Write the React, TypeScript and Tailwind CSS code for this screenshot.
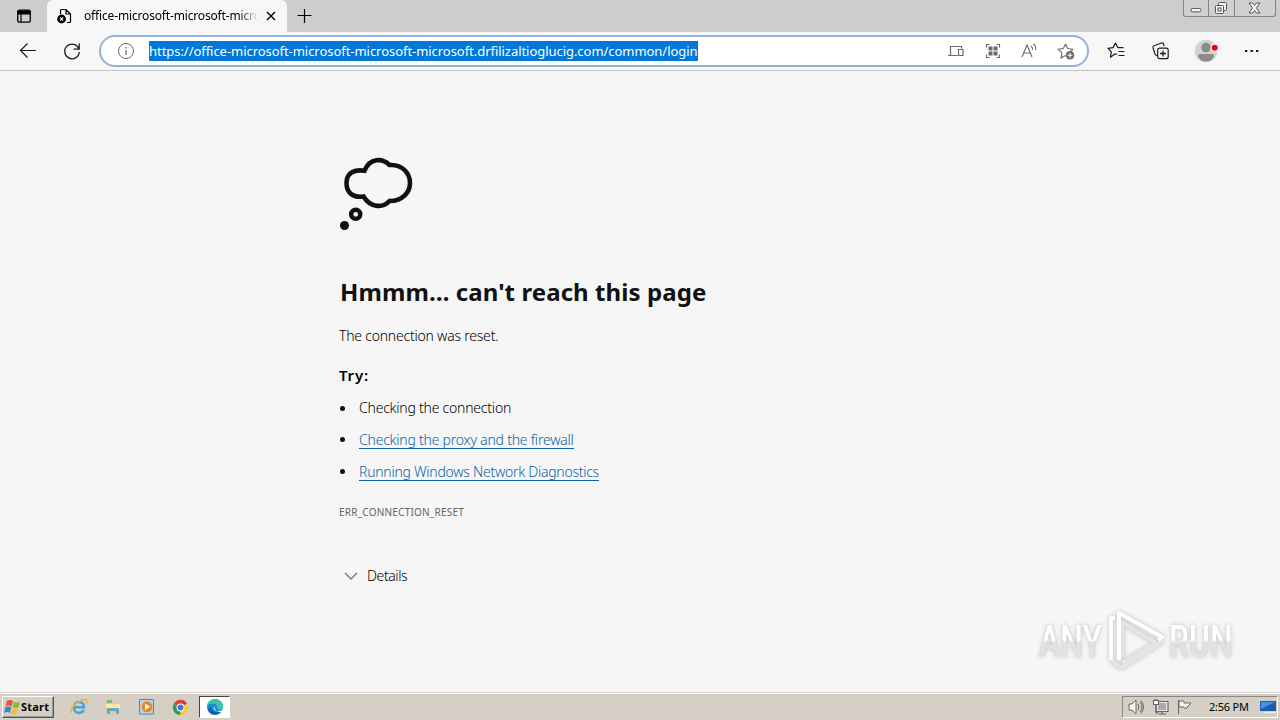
import type { ReactNode } from 'react';

function Icon({ children, className = '', box = '0 0 20 20' }: { children: ReactNode; className?: string; box?: string }) {
  return (
    <svg viewBox={box} fill="none" stroke="currentColor" strokeWidth="1.2" className={`shrink-0 ${className}`}>
      {children}
    </svg>
  );
}

function TabBar() {
  return (
    <div className="flex h-8 bg-[#cdcdcd]">
      <div className="flex w-[47px] items-center justify-center rounded-br-md">
        <Icon className="size-4 text-black" box="0 0 16 16">
          <rect x="1.7" y="2.2" width="12.6" height="12" rx="1.8" strokeWidth="1.3" />
          <path d="M2 3h12v3H2z" fill="currentColor" />
          <path d="M5 6v8" />
        </Icon>
      </div>
      <div className="flex h-8 w-60 items-center rounded-t-md bg-[#f7f7f7] pl-[10px]">
        <Icon className="size-4 text-black" box="0 0 16 16">
          <path d="M3.5 6V2.5q0-1 1-1H9L13.5 6v7.5q0 1-1 1H10M9 1.5V6h4.5" />
          <circle cx="4.6" cy="11" r="4.4" fill="currentColor" stroke="none" />
          <path d="m3 9.4 3.2 3.2m0-3.2L3 12.6" stroke="#f7f7f7" />
        </Icon>
        <div className="ml-[11px] w-[180px] bg-linear-to-r from-black from-86% to-transparent to-97% bg-clip-text text-[12px] leading-4 tracking-[-0.16px] whitespace-nowrap text-transparent">
          office-microsoft-microsoft-micro
        </div>
        <Icon className="ml-[2px] size-[10px] text-black" box="0 0 10 10">
          <path d="m1 1 8 8m0-8L1 9" strokeWidth="1.4" />
        </Icon>
      </div>
      <Icon className="mt-2 ml-[10px] size-4 text-black" box="0 0 16 16">
        <path d="M7.5 1v14M.5 7.5h14" />
      </Icon>
      <div className="mr-[4px] ml-auto flex h-[17px] w-[93px] overflow-hidden rounded-b-[3px] border border-t-0 border-[#858585] bg-[#d0d0d0] text-[#525560]">
        <div className="w-[25px] border-r border-[#858585]">
          <Icon className="size-full" box="0 0 25 16">
            <rect x="7.5" y="8.5" width="10" height="3.5" rx="1" fill="#f4f4f4" strokeWidth="1" />
          </Icon>
        </div>
        <div className="w-[26px] border-r border-[#858585]">
          <Icon className="size-full" box="0 0 25 16">
            <rect x="9.5" y="2.5" width="8" height="8" rx="1" fill="#f4f4f4" strokeWidth="1" />
            <rect x="6.5" y="5.5" width="8" height="8" rx="1" fill="#f4f4f4" strokeWidth="1" />
            <rect x="9" y="8" width="3" height="3" strokeWidth="1" />
          </Icon>
        </div>
        <div className="flex-1">
          <Icon className="size-full" box="0 0 40 16">
            <path d="M14 3h3.5l2 2.4 2-2.4H25l-3.5 5 3.5 5h-3.500l-2-2.600-2 2.600H14l3.500-5z" fill="#f4f4f4" strokeWidth="1" />
          </Icon>
        </div>
      </div>
    </div>
  );
}

function Toolbar() {
  return (
    <div className="flex h-[39px] items-center border-b border-[#c3c3c3] bg-[#f7f7f7] text-[#1b1b1b]">
      <Icon className="ml-[18px] size-5">
        <path d="M18 9.5H2.5m7-7-7 7 7 7" />
      </Icon>
      <Icon className="ml-6 size-5">
        <path d="M17 8.3A7.3 7.3 0 1 0 17.3 11M17.2 2.5v5.7h-5.6" strokeWidth="1.3" />
      </Icon>
      <div className="ml-[17px] flex h-8 w-[990px] items-center rounded-full border-2 border-[#98b0dc] bg-white text-[#6b6b6b]">
        <Icon className="ml-4 size-[18px]" box="0 0 18 18">
          <circle cx="9" cy="9" r="7.5" strokeWidth="1" />
          <path d="M9 8v5M9 5v1.5" strokeWidth="1.3" />
        </Icon>
        <div className="ml-[14px] h-5 w-[549px] bg-[#0078d7] text-[13px] leading-5 tracking-[-0.045px] whitespace-nowrap text-white">
          https://office-microsoft-microsoft-microsoft-microsoft.drfilizaltioglucig.com/common/login
        </div>
        <Icon className="ml-[250px] size-4" box="0 0 16 16">
          <path d="M2.5 12V3.5h11v2M0 12.5h9.5M10.5 6.5H15v6h-4.5z" />
        </Icon>
        <Icon className="ml-[21px] size-4" box="0 0 16 16">
          <path d="M1.500 4.500v-3h3M11.500 1.500h3v3M14.500 11.500v3h-3M4.500 14.500h-3v-3" />
          <path d="M3.500 3.500h4v4h-4zM8.500 3.500h4v4h-4zM3.500 8.500h4v4h-4zM8.500 8.500h4v4h-4z" fill="currentColor" stroke="none" />
        </Icon>
        <Icon className="ml-[19px] size-[18px]" box="0 0 18 18">
          <path d="m2 15 5-12 5 12M4 11h6M11 4q2 1.500 1.500 4M13.500 2q3 2.500 2 6" strokeWidth="1.100" />
        </Icon>
        <Icon className="ml-[19px] size-[19px]">
          <path d="m9 2 2.300 4.900 5.500.7-4 3.700M9 2 6.600 6.900l-5.400.8 4 3.800-1 5.400L9 14.300" strokeLinejoin="round" />
          <circle cx="13.700" cy="14" r="4.500" fill="currentColor" stroke="none" />
          <path d="M13.700 11.500v5M11.200 14h5" stroke="white" />
        </Icon>
      </div>
      <Icon className="ml-[18px] size-5">
        <path d="M10 13.500 8 12.800l-4.500 3.400.8-5.300L1 7.400l5-.8 2.500-4.500 2.300 4.500H16.500M11.500 10.500h6M11.500 14.500h6" strokeLinejoin="round" />
      </Icon>
      <Icon className="ml-6 size-5">
        <path d="M6 14.500q-1.500-.1-2-1.500L2 6.700q-.4-1.500 1-2L10.500 2q1.400-.4 2 1l.6 2" />
        <rect x="6.700" y="7.200" width="10.500" height="10.500" rx="2" />
        <path d="M12 9.500v6M9 12.500h6" strokeWidth="1.300" />
      </Icon>
      <Icon className="ml-[23px] size-6" box="0 0 24 24">
        <circle cx="12" cy="12" r="11.300" fill="#d2d2d2" stroke="none" />
        <circle cx="12" cy="8.500" r="4.800" fill="#8b8b8b" stroke="none" />
        <path d="M4 17q0-2 2-2h12q2 0 2 2-2 5.500-8 5.500T4 17" fill="#8b8b8b" stroke="none" />
        <circle cx="20.700" cy="8.800" r="4" fill="#f7f7f7" stroke="none" />
        <circle cx="20.700" cy="8.800" r="3" fill="#e30613" stroke="none" />
      </Icon>
      <Icon className="ml-[24px] size-5">
        <path d="M3 9h2.300v2H3zM8.500 9h2.300v2H8.500zM14 9h2.300v2H14z" fill="currentColor" stroke="none" />
      </Icon>
    </div>
  );
}

function Watermark() {
  return (
    <div className="absolute top-[608px] left-[1039px] flex h-16 w-[197px] items-center font-['Roboto',sans-serif] text-[45px] leading-none font-medium text-transparent">
      <span className="w-[68px] shrink-0 drop-shadow-[0_0_2px_#bbb]">
        <span className="inline-block origin-left scale-x-[.71] bg-linear-to-b from-white from-50% to-[#e2e2e2] to-55% bg-clip-text pt-[3px]">ANY</span>
      </span>
      <svg viewBox="0 0 60 64" className="h-16 w-[60px] shrink-0 drop-shadow-[0_0_2px_#bbb]" fill="none" strokeLinejoin="round">
        <path d="M4 52l10 8 42-27" stroke="#e6e6e6" strokeWidth="4" />
        <path d="M15 14v35M12 13l37 22-34 20" stroke="#e4e4e4" strokeWidth="4" />
        <path d="M4 52V10h4" stroke="#fff" strokeWidth="3.500" />
        <path d="M12 52V5l43 24-4 3" stroke="#fff" strokeWidth="4" />
      </svg>
      <span className="ml-[2px] w-[68px] shrink-0 drop-shadow-[0_0_2px_#bbb]">
        <span className="inline-block origin-left scale-x-[.71] bg-linear-to-b from-white from-50% to-[#e2e2e2] to-55% bg-clip-text pt-[3px]">RUN</span>
      </span>
    </div>
  );
}

function ErrorPage() {
  return (
    <main className="h-[621px] bg-[#f6f6f6] pt-[86px] pl-[339px] text-[14px] leading-5 font-light tracking-[-0.22px] text-black">
      <svg viewBox="0 0 74 74" className="size-[74px]" fill="none" stroke="#111">
        <path d="M25.500 13.700C31 .8 43 .8 50.500 8 64 7 71 17 71 26S64 44 50.500 44C43 52 31 50 24.500 39.500 13 41 7.500 35 7.500 26s6-14 18-12.300Z" strokeWidth="4.600" />
        <circle cx="16.700" cy="57.300" r="4.600" strokeWidth="4.400" />
        <circle cx="5.500" cy="68.500" r="4.500" fill="#111" stroke="none" />
      </svg>
      <h1 className="mt-[43px] ml-px h-9 text-[24px] leading-9 font-bold tracking-[0.08px] whitespace-nowrap text-[#111]">Hmmm… can't reach this page</h1>
      <p className="mt-4">The connection was reset.</p>
      <p className="mt-[19px] text-[15px] font-semibold tracking-[0.8px]">Try:</p>
      <ul className="mt-[13px] flex flex-col gap-3">
        <li className="flex h-5 items-center gap-[14px]">
          <span className="ml-px size-[5px] rounded-full bg-[#111]" />
          <span>Checking the connection</span>
        </li>
        <li className="flex h-5 items-start gap-[14px]">
          <span className="mt-[7px] ml-px size-[5px] rounded-full bg-[#111]" />
          <a className="h-[19px] border-b border-[#0b62a5] text-[#0b62a5]">Checking the proxy and the firewall</a>
        </li>
        <li className="flex h-5 items-start gap-[14px]">
          <span className="mt-[7px] ml-px size-[5px] rounded-full bg-[#111]" />
          <a className="h-[19px] border-b border-[#0b62a5] tracking-[-0.26px] text-[#0b62a5]">Running Windows Network Diagnostics</a>
        </li>
      </ul>
      <p className="mt-5 text-[10px] font-normal tracking-[0.22px] text-[#656565]">ERR_CONNECTION_RESET</p>
      <div className="mt-11 flex items-center">
        <Icon className="ml-[5px] size-[14px] text-[#777]" box="0 0 14 14">
          <path d="m1 4 6 6 6-6" strokeWidth="1.4" />
        </Icon>
        <span className="ml-[9px] tracking-[-0.4px]">Details</span>
      </div>
    </main>
  );
}

function WindowsFlag() {
  return (
    <svg viewBox="0 0 17 16" className="ml-px h-4 w-[17px] shrink-0">
      <path d="M3 2q3-2 6 0L7.500 7.500q-3-2-6 0z" fill="#e8552b" />
      <path d="M10 2.500q3 1.800 6 0L14.500 8q-3 1.800-6 0z" fill="#8cb63c" />
      <path d="M1.200 8.500q3-2 6 0L6 14q-3-2-6 0z" fill="#3b86d0" />
      <path d="M8.200 9q3 1.800 6 0L13 14.500q-3 1.800-6 0z" fill="#f5bd2c" />
    </svg>
  );
}

function Taskbar() {
  return (
    <div className="flex h-7 items-center bg-[#d5cfc6] shadow-[inset_0_1px_#dedad3,inset_0_2px_#fff]">
      <div className="mt-[2px] ml-[2px] flex h-[22px] w-[52px] items-center border border-t-white border-r-[#555] border-b-[#555] border-l-white shadow-[inset_-1px_-1px_#999]">
        <WindowsFlag />
        <span className="text-[11px] font-bold tracking-[0.2px] text-black">Start</span>
      </div>
      <svg viewBox="0 0 18 18" className="mt-[2px] ml-4 size-[18px]">
        <path d="M14 12Q12 15 8.500 15C1.500 14 3 4 9 4q5 0 5 5.300H4" fill="none" stroke="#45a5dc" strokeWidth="2.600" />
        <path d="M1 15C-1 10 10 1 16 1.500q2 1 0 4" fill="none" stroke="#e8b640" strokeWidth="1.600" />
      </svg>
      <svg viewBox="0 0 18 18" className="mt-[2px] ml-4 size-[18px]">
        <path d="M1.500 3h6l1 2H15v10H1.500z" fill="#e8cc73" />
        <path d="M3 2h5v3H3z" fill="#7db77c" />
        <path d="M2 6h14v4H2z" fill="#faeaa9" />
        <path d="M3 16v-5q0-1 1-1h9q2 0 2 1.500V16h-3v-3H6v3z" fill="#62aacc" />
      </svg>
      <svg viewBox="0 0 18 18" className="mt-[2px] ml-4 size-[18px]">
        <path d="M1.500 1.500h14v14.500h-14z" fill="#b6d5ea" stroke="#4e88b6" />
        <circle cx="9" cy="8.800" r="5.500" fill="#f18719" />
        <path d="m7 5.500 5 3.300-5 3.300z" fill="white" />
      </svg>
      <svg viewBox="0 0 18 18" className="mt-[2px] ml-4 size-[17px]">
        <path d="M9 9 2 5a8 8 0 0 1 14 0z" fill="#db4031" />
        <path d="M9 9 9 17A8 8 0 0 1 2 5z" fill="#2f9d50" />
        <path d="M9 9 16 5A8 8 0 0 1 9 17z" fill="#f7c831" />
        <circle cx="9" cy="9" r="4.200" fill="white" />
        <circle cx="9" cy="9" r="3.200" fill="#3979dc" />
      </svg>
      <div className="mt-[2px] ml-[10px] flex h-[22px] w-[31px] items-center justify-center border border-t-[#444] border-r-white border-b-white border-l-[#444] bg-white">
        <svg viewBox="0 0 18 18" className="size-[18px]">
          <circle cx="9" cy="9" r="8" fill="#1787ce" />
          <path d="M1 8C2-.5 14-1 17 7c1 5-5 6-6 3 1-5-7-6-10-2" fill="#3dc5ac" />
          <path d="M5 9c1 6 6 6 10 4-4 6-12 4-13-2z" fill="#1060aa" />
          <path d="M8 8q-2 5 5 5 3 0 4-2v2q-3 2-6 0-3-2-3-5" fill="white" />
        </svg>
      </div>
      <div className="mt-[2px] mr-[2px] ml-auto flex h-[22px] w-[156px] items-center border border-t-[#888] border-r-white border-b-white border-l-[#888] text-[#666]">
        <Icon className="ml-[5px] size-[18px]" box="0 0 18 18">
          <path d="M1 6h3l4-4v14l-4-4H1z" fill="#f4f4f4" strokeWidth="1" />
          <path d="M10 6q2 3 0 6M12 4q4 5 0 10M13 2.500q5 6.500 0 13" strokeWidth="1" />
        </Icon>
        <Icon className="ml-[6px] size-[18px]" box="0 0 18 18">
          <rect x="5" y="4" width="10" height="9" fill="#aaa" stroke="#fff" strokeWidth="1.500" />
          <path d="M7 3.500h9v10H4V7M10 14v2M7 16h7" />
          <path d="M1.500 2.500h5v4h-5z" fill="#fff" />
          <path d="M3 1v2M5 1v2M4 7v8h3" />
        </Icon>
        <Icon className="ml-[6px] size-[18px]" box="0 0 18 18">
          <path d="M2.500 2v14M3 3h5v2h7l-3 3-1 2H8V9H3z" fill="#f4f4f4" strokeWidth="1" />
        </Icon>
        <span className="ml-[15px] w-[42px] text-[11px] tracking-[-0.22px] whitespace-nowrap text-black">2:56 PM</span>
        <svg viewBox="0 0 16 14" className="ml-[9px] h-[14px] w-4">
          <path d="M0 1h16v10H0z" fill="#205baf" />
          <path d="M1 2h14L1 9z" fill="#4593df" />
          <path d="M4 12h12v1H4z" fill="#eee" />
        </svg>
      </div>
    </div>
  );
}

export default function App() {
  return (
    <div className="relative h-[720px] w-[1280px] overflow-hidden bg-[#f6f6f6] font-['Noto_Sans','Open_Sans',sans-serif]">
      <TabBar />
      <Toolbar />
      <ErrorPage />
      <Taskbar />
      <Watermark />
    </div>
  );
}
